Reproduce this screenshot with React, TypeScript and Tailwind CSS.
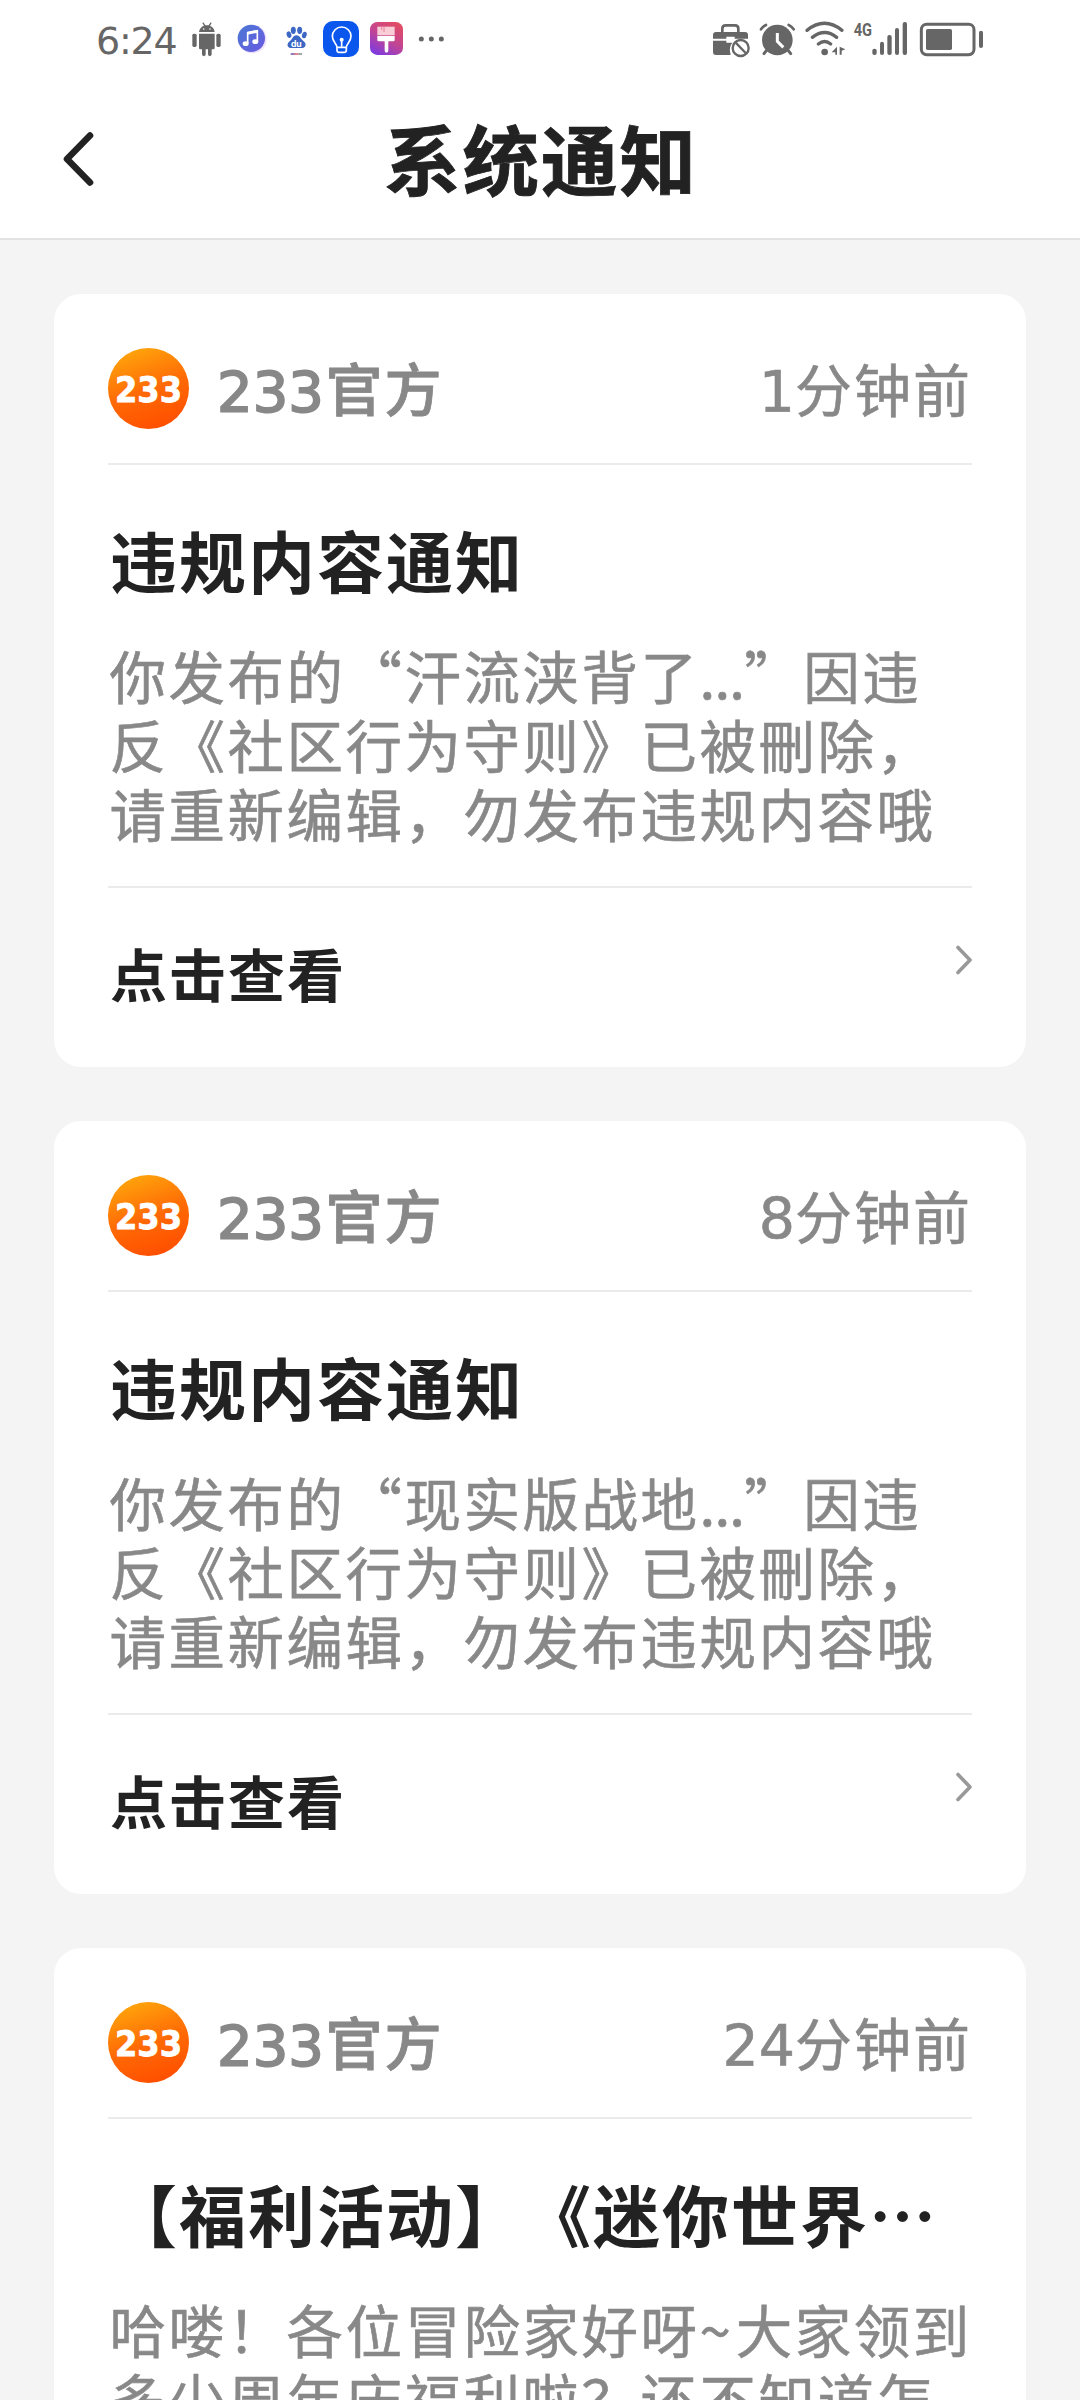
import React from "react";

const CJK = "font-['Noto_Sans_CJK_SC',sans-serif]";
const DIGITS = "font-['DejaVu_Sans','Noto_Sans_CJK_SC',sans-serif]";

type Notice = { time: [string, string]; title: string; lines: React.ReactNode[] };

const Dots = () => <span className="tracking-[-0.8px]">...</span>;

const notices: Notice[] = [
  {
    time: ["1", "分钟前"],
    title: "违规内容通知",
    lines: [
      <>你发布的“汗流浃背了<Dots />”因违</>,
      "反《社区行为守则》已被刪除，",
      "请重新编辑，勿发布违规内容哦",
    ],
  },
  {
    time: ["8", "分钟前"],
    title: "违规内容通知",
    lines: [
      <>你发布的“现实版战地<Dots />”因违</>,
      "反《社区行为守则》已被刪除，",
      "请重新编辑，勿发布违规内容哦",
    ],
  },
  {
    time: ["24", "分钟前"],
    title: "【福利活动】《迷你世界…",
    lines: [
      <>哈喽！各位冒险家好呀<span className="tracking-[5px]">~</span>大家领到</>,
      "多少周年庆福利啦？还不知道怎",
    ],
  },
];

function StatusBar() {
  return (
    <div className="flex h-20 justify-between pl-20 pr-[90px] text-[#666]">
      <div className="flex">
        <div className="w-[108px] pl-4 pt-[16px] font-['DejaVu_Sans',sans-serif] text-[38px] leading-[50px] tracking-[-1.2px] whitespace-nowrap">
          6:24
        </div>
        <svg className="h-20 w-10" viewBox="324 0 120 240" fill="currentColor">
          <path d="M357 96c1-10 8-17 15-19l-5-8 3-2 6 9h10l6-9 3 2-5 8c7 3 13 9 14 19z" />
          <circle cx="371" cy="87" r="2.5" fill="#fff" />
          <circle cx="390" cy="87" r="2.5" fill="#fff" />
          <path d="M357 101h47v43q0 4-4 4h-5v15a5 5 0 0 1-11 0v-15h-7v15a5 5 0 0 1-11 0v-15h-5q-4 0-4-4z" />
          <rect x="337" y="101" width="13" height="40" rx="5" />
          <rect x="409" y="101" width="13" height="40" rx="5" />
        </svg>
        <svg className="h-20 w-12" viewBox="444 0 144 240">
          <defs>
            <linearGradient id="music" x1="0" y1="0" x2="1" y2="1">
              <stop offset="0" stopColor="#4a78d4" />
              <stop offset="1" stopColor="#6a5ae0" />
            </linearGradient>
          </defs>
          <circle cx="517" cy="117" r="43" fill="#eee2fb" />
          <circle cx="514" cy="115" r="41" fill="url(#music)" />
          <path d="M503 130V98l29-6v32" fill="none" stroke="#fff" strokeWidth="5" />
          <path d="M501 96l33-6v8l-33 6z" fill="#fff" />
          <ellipse cx="497" cy="131" rx="9" ry="7" fill="#fff" />
          <ellipse cx="526" cy="125" rx="9" ry="7" fill="#fff" />
        </svg>
        <svg className="h-20 w-[42px]" viewBox="588 0 126 240" fill="#3d67c4">
          <ellipse cx="627" cy="104" rx="7" ry="10" transform="rotate(-15 627 104)" />
          <ellipse cx="640" cy="91" rx="7.5" ry="11" />
          <ellipse cx="659" cy="91" rx="7.5" ry="11" />
          <ellipse cx="673" cy="105" rx="7" ry="10" transform="rotate(15 673 105)" />
          <path d="M649 106c10 0 12 9 18 14 7 6 12 11 9 18-3 8-14 6-27 6s-23 2-26-6c-2-7 3-12 10-18 5-5 7-14 16-14z" />
          <text x="649" y="140" textAnchor="middle" fill="#fff" className="font-['Inter',sans-serif] text-[26px] font-bold">du</text>
          <path d="M632 162h12" stroke="#5a3c8c" strokeWidth="4" />
          <path d="M643 162h12" stroke="#d6475c" strokeWidth="4" />
          <path d="M655 162h11" stroke="#777" strokeWidth="4" />
        </svg>
        <svg className="h-20 w-[46px]" viewBox="714 0 138 240" fill="none" stroke="#fff">
          <rect x="729" y="63" width="108" height="108" rx="30" fill="#0b57ee" stroke="none" />
          <path d="M771 142c0-11-14-17-14-33a28 28 0 0 1 56 0c0 16-14 22-14 33z" strokeWidth="5" strokeLinejoin="round" />
          <path d="M771 142v9q0 6 6 6h16q6 0 6-6v-9M785 122v18" strokeWidth="5" />
          <circle cx="785" cy="119" r="6" fill="#fff" stroke="none" />
        </svg>
        <svg className="h-20 w-[46px]" viewBox="852 0 138 240">
          <defs>
            <linearGradient id="brush" x1="0.8" y1="0" x2="0.2" y2="1">
              <stop offset="0" stopColor="#e34c62" />
              <stop offset="0.5" stopColor="#c24594" />
              <stop offset="1" stopColor="#7c3ae0" />
            </linearGradient>
          </defs>
          <rect x="870" y="66" width="99" height="99" rx="22" fill="url(#brush)" />
          <path d="M892 80h52v26h-52z" fill="#f8cdd6" />
          <path d="M892 108h52v12q0 4-4 4h-15v28a5 5 0 0 1-11 0v-28h-18q-4 0-4-4z" fill="#fff" />
          <path d="M905 80v10M912 80v16" stroke="#e87f94" strokeWidth="3" />
        </svg>
        <svg className="h-20 w-10" viewBox="990 0 120 240" fill="currentColor">
          <circle cx="1024" cy="117" r="7.5" />
          <circle cx="1054" cy="117" r="7.5" />
          <circle cx="1084" cy="117" r="7.5" />
        </svg>
      </div>
      <div className="flex">
        <svg className="h-20 w-12" viewBox="54 0 144 240" fill="currentColor">
          <path d="M97 96V86q0-10 10-10h28q10 0 10 10v10" fill="none" stroke="currentColor" strokeWidth="8" />
          <path d="M69 116v-11q0-9 9-9h87q9 0 9 9v11h-40v-6h-25v6z" />
          <path d="M69 122h40v6h18q-12 14-5 37H78q-9 0-9-9z" />
          <circle cx="152" cy="144" r="24" fill="#fff" stroke="currentColor" strokeWidth="7" />
          <path d="M137 128l30 31" stroke="currentColor" strokeWidth="7" />
        </svg>
        <svg className="h-20 w-11" viewBox="198 0 132 240" fill="none" stroke="currentColor" strokeLinecap="round">
          <circle cx="262" cy="120" r="46" fill="currentColor" stroke="none" />
          <path d="M213 88q6-9 15-13M311 88q-6-9-15-13" strokeWidth="8" />
          <path d="M229 152l-7 9M295 152l7 9" strokeWidth="9" />
          <path d="M262 99v25l18 18" stroke="#fff" strokeWidth="9" strokeLinecap="butt" />
        </svg>
        <svg className="h-20 w-[50px]" viewBox="330 0 150 240" fill="none" stroke="currentColor" strokeWidth="10" strokeLinecap="round">
          <path d="M351 91q52-42 105 0M367 112q37-29 73 0M385 132q19-15 37 0" />
          <circle cx="404" cy="156" r="10" fill="currentColor" stroke="none" />
          <path d="M441 140v24h-5v-7h-11zM449 164v-24l17 8-11 4v12z" fill="currentColor" stroke="none" />
        </svg>
        <svg className="h-20 w-16" viewBox="480 0 192 240" fill="currentColor">
          <text x="491" y="108" textLength="55" lengthAdjust="spacingAndGlyphs" className="font-['Roboto',sans-serif] text-[56px] font-bold">4G</text>
          <rect x="547" y="146" width="13" height="19" rx="6" />
          <rect x="570" y="125" width="12" height="40" rx="6" />
          <rect x="592" y="105" width="13" height="60" rx="6" />
          <rect x="615" y="84" width="12" height="81" rx="6" />
          <rect x="638" y="66" width="13" height="99" rx="6" />
        </svg>
        <svg className="h-20 w-[76px]" viewBox="672 0 228 240" fill="currentColor">
          <rect x="694" y="73" width="158" height="91" rx="16" fill="none" stroke="currentColor" strokeWidth="9" />
          <rect x="708" y="87" width="78" height="63" rx="5" />
          <rect x="867" y="92" width="12" height="52" rx="6" />
        </svg>
      </div>
    </div>
  );
}

function Avatar() {
  return (
    <svg className="-mt-px size-[81px] shrink-0" viewBox="0 0 81 81">
      <defs>
        <linearGradient id="orange" x1="0.2" y1="0" x2="0.55" y2="1">
          <stop offset="0" stopColor="#ffa90c" />
          <stop offset="0.55" stopColor="#ff6a05" />
          <stop offset="1" stopColor="#ff5000" />
        </linearGradient>
      </defs>
      <circle cx="40.5" cy="40.5" r="40.5" fill="url(#orange)" />
      <text x="7" y="54" textLength="67" lengthAdjust="spacingAndGlyphs" fill="#fff" stroke="#fff" strokeWidth="0.8" className="font-['DejaVu_Sans',sans-serif] text-[36px] font-bold">233</text>
    </svg>
  );
}

function Card({ notice }: { notice: Notice }) {
  return (
    <section className="h-[773px] shrink-0 rounded-[27px] bg-white px-[54px]">
      <div className="flex h-[169px] items-center pt-[20px] text-[57px] leading-[80px] text-[#888]">
        <Avatar />
        <div className="ml-[28px] flex items-baseline font-medium whitespace-nowrap [-webkit-text-stroke:0.8px_#888]">
          <span className={`${DIGITS} text-[56px] font-normal [-webkit-text-stroke:1.8px_#888]`}>233</span>
          <span className={`${CJK} ml-[1.5px] tracking-[2px]`}>官方</span>
        </div>
        <div className="ml-auto flex items-baseline pt-[2px] whitespace-nowrap [-webkit-text-stroke:0.6px_#888]">
          <span className={DIGITS}>{notice.time[0]}</span>
          <span className={`${CJK} tracking-[2px]`}>{notice.time[1]}</span>
        </div>
      </div>
      <div className="h-0.5 bg-[#ebebeb]" />
      <h2 className="mt-[43px] h-[102px] pl-[2px] text-[67px] leading-[102px] font-bold tracking-[2px] whitespace-nowrap text-[#222]">
        {notice.title}
      </h2>
      <div className="mt-[30px] pl-[1.5px] text-[56.5px] leading-[69px] tracking-[2.5px] whitespace-nowrap text-[#888] [-webkit-text-stroke:0.6px_#888]">
        {notice.lines.map((line, i) => (
          <p key={i}>{line}</p>
        ))}
      </div>
      <div className="mt-[39px] h-0.5 bg-[#ebebeb]" />
      <div className="flex justify-between">
        <span className="mt-[44px] pl-[2px] text-[57px] leading-[80px] font-bold tracking-[2px] text-[#222]">点击查看</span>
        <svg className="mt-[56px] h-8 w-[18px]" viewBox="0 0 18 32" fill="none" stroke="#999" strokeWidth="3.6" strokeLinecap="round" strokeLinejoin="round">
          <path d="M4 3.5L16 16 4 28.5" />
        </svg>
      </div>
    </section>
  );
}

export default function App() {
  return (
    <div lang="zh-CN" className={`${CJK} flex h-[2400px] w-[1080px] flex-col overflow-hidden bg-[#f4f4f4] [text-spacing-trim:space-all]`}>
      <header className="h-[240px] shrink-0 border-b-2 border-[#e2e2e2] bg-white">
        <StatusBar />
        <div className="grid h-[158px] grid-cols-[1fr_auto_1fr] items-center">
          <svg className="ml-[60px] h-[60px] w-9" viewBox="0 0 36 60" fill="none" stroke="#222" strokeWidth="6.6" strokeLinecap="round" strokeLinejoin="round">
            <path d="M30 6.5L7 30 30 53.5" />
          </svg>
          <h1 className="-mt-1 pl-[2px] text-[76.5px] leading-[110px] font-bold tracking-[2px] text-[#222] [-webkit-text-stroke:0.8px_#222]">系统通知</h1>
          <span />
        </div>
      </header>
      <main className="flex flex-col gap-[54px] px-[54px] pt-[54px]">
        {notices.map((notice, i) => (
          <Card key={i} notice={notice} />
        ))}
      </main>
    </div>
  );
}
